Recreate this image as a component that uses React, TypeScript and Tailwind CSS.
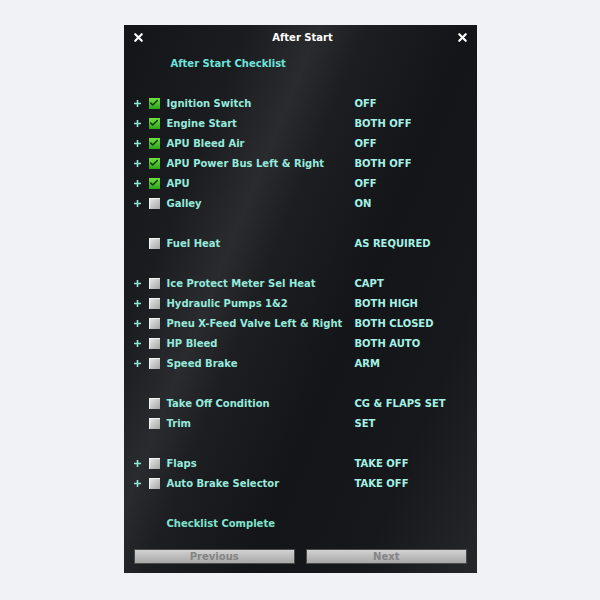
import { Check, X } from "lucide-react";

type Item = {
  label: string;
  value: string;
  plus?: boolean;
  done?: boolean;
} | null;

const items: Item[] = [
  { label: "Ignition Switch", value: "OFF", plus: true, done: true },
  { label: "Engine Start", value: "BOTH OFF", plus: true, done: true },
  { label: "APU Bleed Air", value: "OFF", plus: true, done: true },
  { label: "APU Power Bus Left & Right", value: "BOTH OFF", plus: true, done: true },
  { label: "APU", value: "OFF", plus: true, done: true },
  { label: "Galley", value: "ON", plus: true },
  null,
  { label: "Fuel Heat", value: "AS REQUIRED" },
  null,
  { label: "Ice Protect Meter Sel Heat", value: "CAPT", plus: true },
  { label: "Hydraulic Pumps 1&2", value: "BOTH HIGH", plus: true },
  { label: "Pneu X-Feed Valve Left & Right", value: "BOTH CLOSED", plus: true },
  { label: "HP Bleed", value: "BOTH AUTO", plus: true },
  { label: "Speed Brake", value: "ARM", plus: true },
  null,
  { label: "Take Off Condition", value: "CG & FLAPS SET" },
  { label: "Trim", value: "SET" },
  null,
  { label: "Flaps", value: "TAKE OFF", plus: true },
  { label: "Auto Brake Selector", value: "TAKE OFF", plus: true },
  null,
];

function CheckBox({ done }: { done?: boolean }) {
  if (done) {
    return (
      <div className="w-[11px] h-[11px] bg-gradient-to-b from-[#6fe23f] to-[#2aa51a] flex items-center justify-center">
        <Check className="w-[10px] h-[10px] text-[#10300c]" strokeWidth={3.5} />
      </div>
    );
  }
  return (
    <div className="w-[11px] h-[11px] bg-gradient-to-br from-[#e6e6e6] to-[#a6a6a6] border-t border-l border-[#f4f4f4]" />
  );
}

function Row({ item }: { item: Item }) {
  if (!item) return <div className="h-[20px]" />;
  return (
    <div className="h-[20px] flex items-center">
      <div className="w-[25px] pl-[10px] flex items-center">
        {item.plus && (
          <svg width="7" height="7" viewBox="0 0 7 7">
            <path d="M0 3.5H7M3.5 0V7" stroke="#8fe6d6" strokeWidth="1.6" />
          </svg>
        )}
      </div>
      <div className="w-[18px]">
        <CheckBox done={item.done} />
      </div>
      <div className="w-[188px] whitespace-nowrap">{item.label}</div>
      <div className="whitespace-nowrap text-[#a4f2e4]">{item.value}</div>
    </div>
  );
}

export default function App() {
  return (
    <div className="w-[600px] h-[600px] bg-[#f1f2f5] flex justify-center pt-[25px]">
      <div
        className="w-[353px] h-[548px] flex flex-col text-[10px] font-bold text-[#96eadc] bg-[linear-gradient(112deg,#141519_0%,#1b1c20_22%,#2a2b2f_34%,#1d1e22_42%,#141519_60%,#17181c_80%,#262729_100%)]"
        style={{ fontFamily: '"DejaVu Sans", sans-serif' }}
      >
        <div className="h-[24px] flex items-center justify-between pl-[8px] pr-[7px]">
          <X className="w-[13px] h-[13px] text-white" strokeWidth={4} />
          <div className="text-white text-[10px] pl-[4px]">After Start</div>
          <X className="w-[13px] h-[13px] text-white" strokeWidth={4} />
        </div>
        <div className="pt-[4px] flex flex-col">
          <div className="h-[20px] flex items-center pl-[47px] text-[#6ee4dc]">After Start Checklist</div>
          <div className="h-[20px]" />
          {items.map((item, i) => (
            <Row key={i} item={item} />
          ))}
          <div className="h-[20px] flex items-center pl-[43px] text-[#7fe3cc]">Checklist Complete</div>
        </div>
        <div className="flex gap-[11px] px-[10px] mt-[16px]">
          <button className="w-[163px] h-[15px] bg-gradient-to-b from-[#d2d2d2] to-[#a8a8a8] border border-[#4a4a4a] text-[#848484] text-[10px] leading-none">
            Previous
          </button>
          <button className="w-[162px] h-[15px] bg-gradient-to-b from-[#d2d2d2] to-[#a8a8a8] border border-[#4a4a4a] text-[#848484] text-[10px] leading-none">
            Next
          </button>
        </div>
      </div>
    </div>
  );
}
